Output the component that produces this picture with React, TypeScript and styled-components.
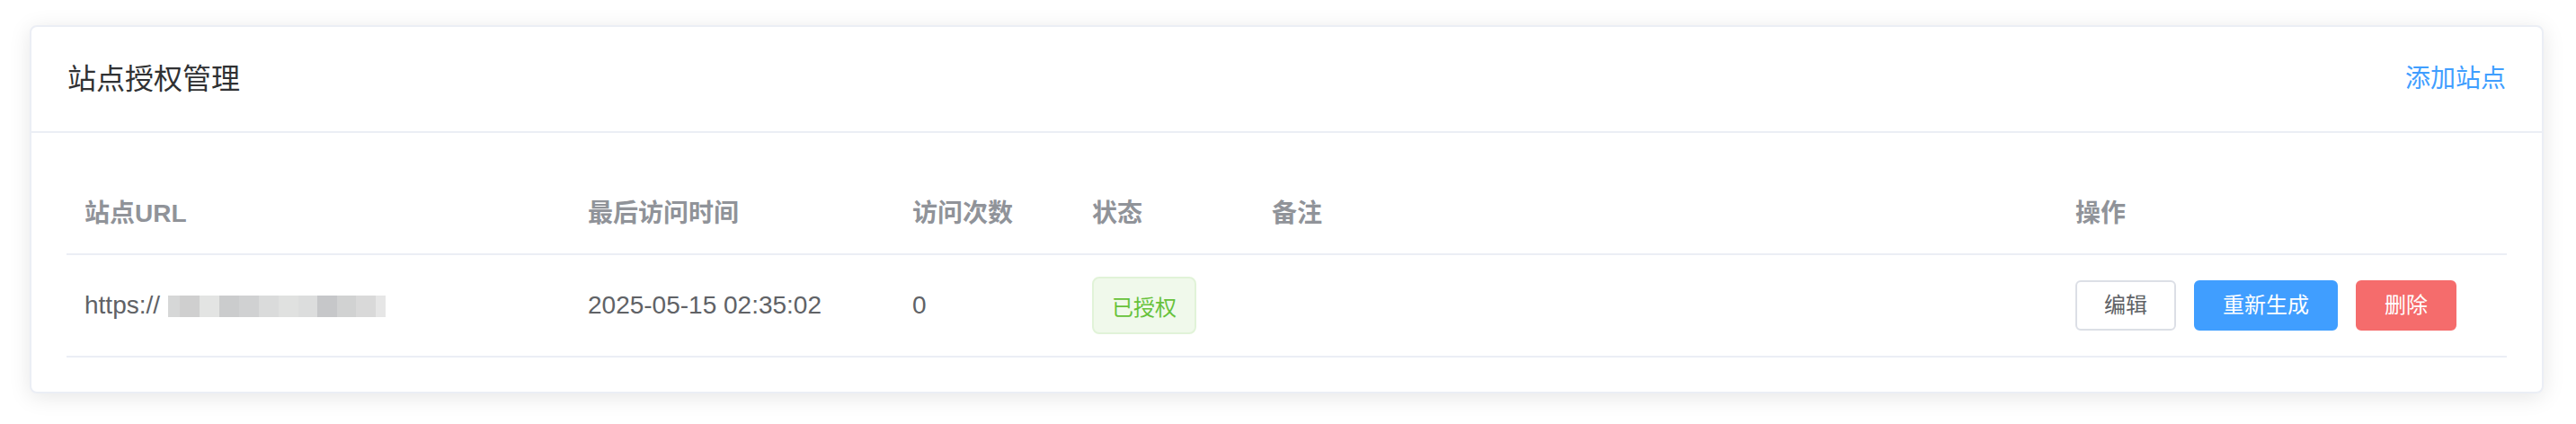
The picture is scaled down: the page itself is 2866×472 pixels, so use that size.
import React from "react";
import styled, { createGlobalStyle } from "styled-components";

const GlobalStyle = createGlobalStyle`
  html, body {
    margin: 0;
    padding: 0;
    background: #ffffff;
  }
  body {
    font-family: "Liberation Sans", "Noto Sans CJK SC", sans-serif;
    -webkit-font-smoothing: antialiased;
  }
`;

const Page = styled.div`
  padding: 28px 36px 30px 33px;
`;

const Card = styled.div`
  box-sizing: border-box;
  width: 2797px;
  border: 2px solid #ebeef5;
  border-radius: 8px;
  background: #fff;
  box-shadow: 0 4px 24px 0 rgba(0, 0, 0, 0.1);
  overflow: hidden;
`;

const CardHeader = styled.div`
  display: flex;
  align-items: center;
  justify-content: space-between;
  height: 116px;
  padding: 0 40px;
  border-bottom: 2px solid #ebeef5;
`;

const Title = styled.span`
  font-size: 32px;
  color: #303133;
  line-height: 1;
`;

const LinkButton = styled.button`
  border: none;
  background: transparent;
  padding: 0;
  font-family: inherit;
  font-size: 28px;
  line-height: 1;
  color: #409eff;
  cursor: pointer;
`;

const CardBody = styled.div`
  padding: 40px 39px 38px 39px;
`;

const Row = styled.div<{ $height: number }>`
  display: grid;
  grid-template-columns: 560px 361px 200px 200px 1fr 500px;
  height: ${(p) => p.$height}px;
  border-bottom: 2px solid #ebeef5;
`;

const HeadCell = styled.div`
  display: flex;
  align-items: center;
  padding: 0 20px;
  font-size: 28px;
  font-weight: bold;
  color: #909399;
`;

const Cell = styled.div`
  display: flex;
  align-items: center;
  padding: 0 20px;
  font-size: 28px;
  color: #606266;
  white-space: nowrap;
`;

const ActionCell = styled(Cell)`
  gap: 20px;
`;

const Mosaic = styled.span`
  display: inline-flex;
  height: 24px;
  margin-left: 9px;
  margin-top: 1px;
`;

const Tile = styled.span<{ $w: number; $c: string }>`
  display: block;
  width: ${(p) => p.$w}px;
  height: 100%;
  background: ${(p) => p.$c};
`;

const UrlText = styled.span`
  display: inline-flex;
  align-items: center;
`;

const Tag = styled.span`
  box-sizing: border-box;
  display: inline-flex;
  align-items: center;
  height: 64px;
  padding: 0 20px;
  font-size: 24px;
  color: #67c23a;
  background: #f0f9eb;
  border: 2px solid #e1f3d8;
  border-radius: 8px;
`;

const Button = styled.button<{ $variant: "default" | "primary" | "danger" }>`
  box-sizing: border-box;
  height: 56px;
  padding: 0 30px;
  font-family: inherit;
  font-size: 24px;
  line-height: 1;
  border-radius: 6px;
  border: 2px solid
    ${(p) =>
      p.$variant === "primary" ? "#409eff" : p.$variant === "danger" ? "#f56c6c" : "#dcdfe6"};
  background: ${(p) =>
    p.$variant === "primary" ? "#409eff" : p.$variant === "danger" ? "#f56c6c" : "#fff"};
  color: ${(p) => (p.$variant === "default" ? "#606266" : "#fff")};
  cursor: pointer;
`;

const tiles: [number, string][] = [
  [13, "#d6d7d7"],
  [22, "#cfcfcf"],
  [22, "#e3e4e3"],
  [22, "#cbcccd"],
  [22, "#d0d1d2"],
  [22, "#dadbdb"],
  [22, "#e0e1e0"],
  [21, "#dcdddd"],
  [22, "#c6c7c9"],
  [21, "#d1d2d2"],
  [22, "#d9d9d9"],
  [11, "#e6e6e6"],
];

export default function App() {
  return (
    <>
      <GlobalStyle />
      <Page>
        <Card>
          <CardHeader>
            <Title>站点授权管理</Title>
            <LinkButton>添加站点</LinkButton>
          </CardHeader>
          <CardBody>
            <Row $height={94}>
              <HeadCell>站点URL</HeadCell>
              <HeadCell>最后访问时间</HeadCell>
              <HeadCell>访问次数</HeadCell>
              <HeadCell>状态</HeadCell>
              <HeadCell>备注</HeadCell>
              <HeadCell>操作</HeadCell>
            </Row>
            <Row $height={112}>
              <Cell>
                <UrlText>
                  https://
                  <Mosaic>
                    {tiles.map(([w, c], i) => (
                      <Tile key={i} $w={w} $c={c} />
                    ))}
                  </Mosaic>
                </UrlText>
              </Cell>
              <Cell>2025-05-15 02:35:02</Cell>
              <Cell>0</Cell>
              <Cell>
                <Tag>已授权</Tag>
              </Cell>
              <Cell />
              <ActionCell>
                <Button $variant="default">编辑</Button>
                <Button $variant="primary">重新生成</Button>
                <Button $variant="danger">删除</Button>
              </ActionCell>
            </Row>
          </CardBody>
        </Card>
      </Page>
    </>
  );
}
